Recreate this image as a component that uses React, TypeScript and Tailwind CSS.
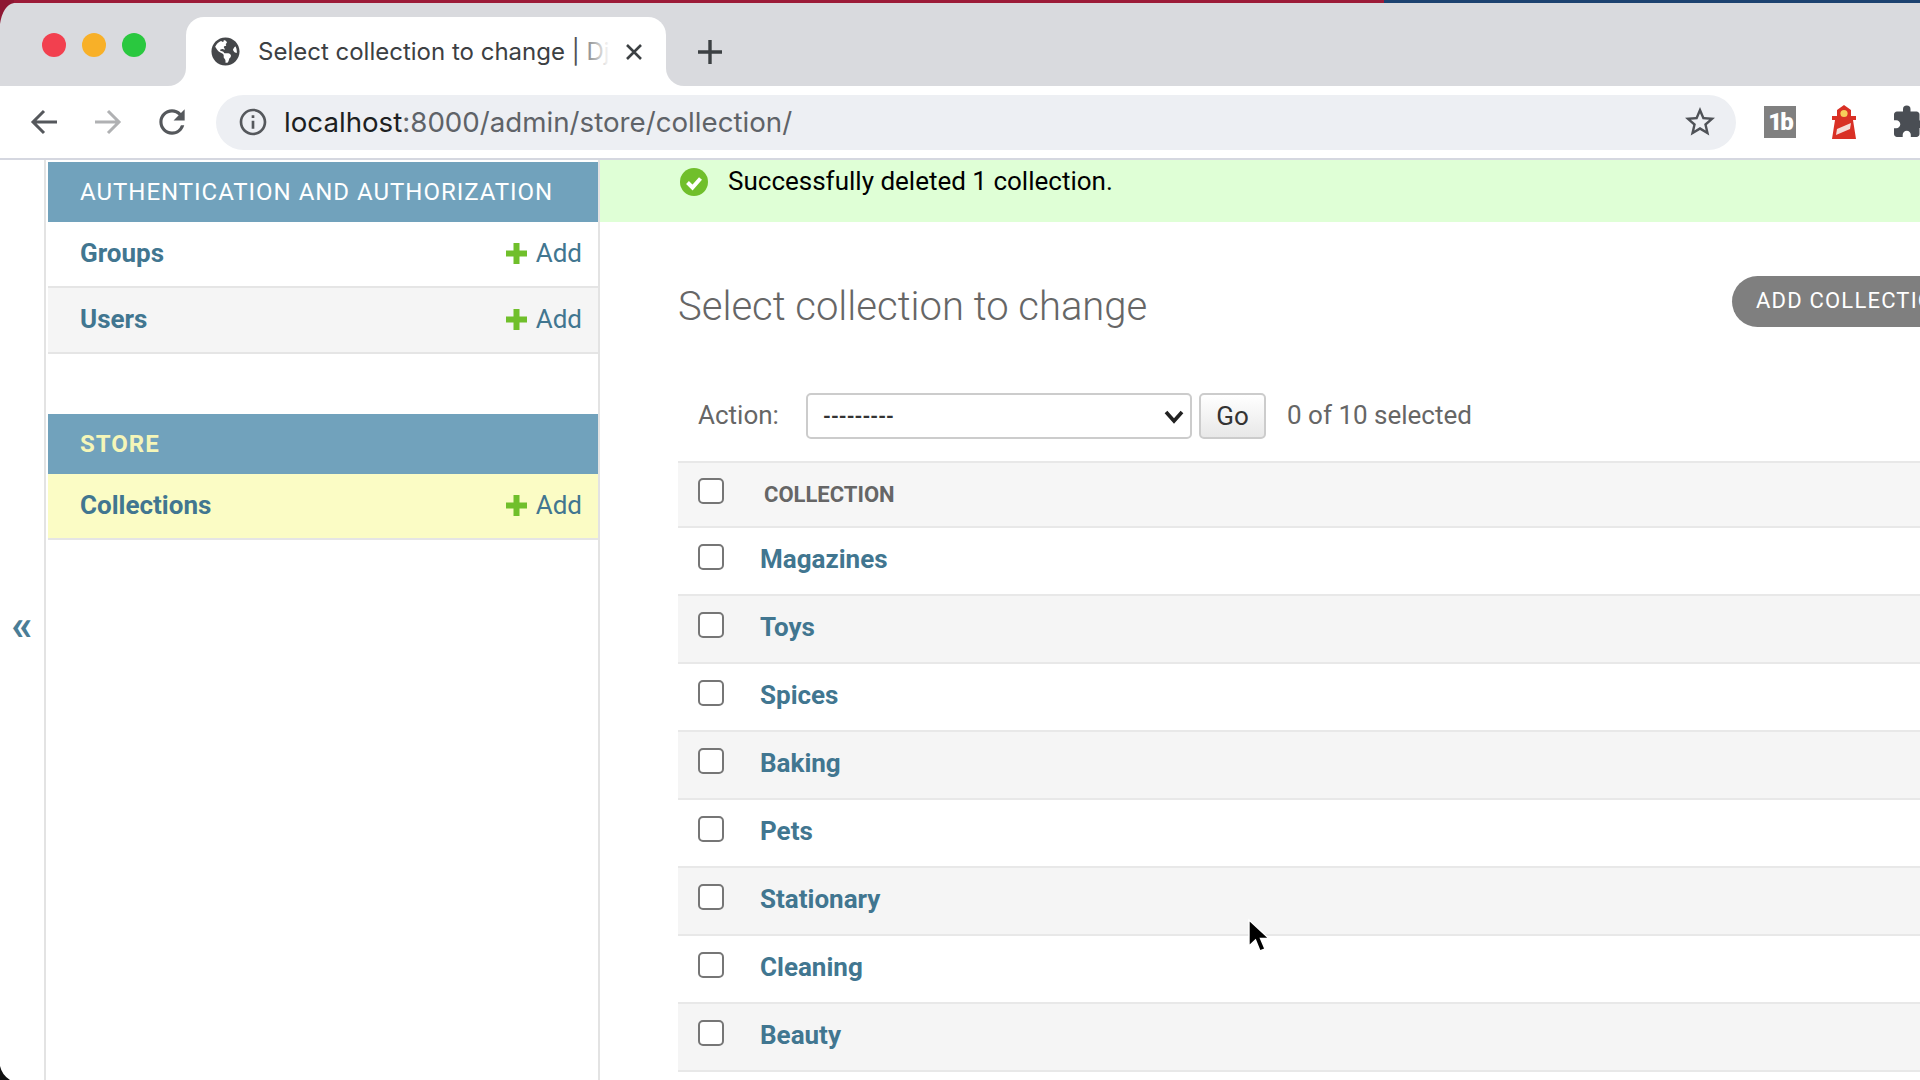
import React from "react";
import { FaGlobeAmericas } from "react-icons/fa";
import { MdExtension, MdInfoOutline, MdRefresh, MdStarBorder } from "react-icons/md";

const roboto = { fontFamily: "Roboto, sans-serif" } as const;

function Plus() {
  return (
    <svg width="23" height="23" viewBox="0 0 23 23" className="shrink-0">
      <path d="M8.5 1h6v7.5H22v6h-7.500V22h-6v-7.500H1v-6h7.500z" fill="#70bf2b" />
    </svg>
  );
}

function ModuleRow({ name, bg }: { name: string; bg: string }) {
  return (
    <div className={`flex items-center justify-between h-[66px] border-b-2 border-[#e5e5e5] pl-[32px] pr-[16px] pb-[2px] ${bg}`}>
      <span className="font-bold text-[#417690] text-[26px]">{name}</span>
      <span className="flex items-center gap-[8px] text-[#417690] text-[26px]">
        <Plus />
        Add
      </span>
    </div>
  );
}

function ModuleHead({ children, yellow }: { children: React.ReactNode; yellow?: boolean }) {
  return (
    <div className={`flex items-center h-[60px] bg-[#71a2bc] pl-[32px] text-[24px] tracking-[0.98px] uppercase ${yellow ? "text-[#f5f6b8] font-bold" : "text-white"}`}>
      {children}
    </div>
  );
}

function Check() {
  return (
    <input
      type="checkbox"
      readOnly
      className="appearance-none block shrink-0 w-[26px] h-[26px] border-2 border-[#767676] rounded-[5px] bg-white"
    />
  );
}

function Row({ name, gray }: { name: string; gray: boolean }) {
  return (
    <div className={`flex items-start h-[68px] border-b-2 border-[#e8e8e8] pl-[20px] pt-[16px] gap-[36px] ${gray ? "bg-[#f5f5f5]" : "bg-white"}`}>
      <Check />
      <span className="font-bold text-[#417690] text-[26px] leading-[30px]">{name}</span>
    </div>
  );
}

export default function App() {
  const rows = ["Magazines", "Toys", "Spices", "Baking", "Pets", "Stationary", "Cleaning", "Beauty"];
  return (
    <div className="relative w-[1920px] h-[1080px] overflow-hidden bg-white flex flex-col" style={roboto}>
      {/* wallpaper strip */}
      <div className="flex h-[3px] shrink-0">
        <div className="w-[1384px] bg-[#9c1b38]" />
        <div className="flex-1 bg-[#1c4270]" />
      </div>

      {/* tab strip */}
      <div className="flex h-[83px] shrink-0 bg-white">
        <div className="w-[186px] shrink-0 bg-[#d9dade] rounded-br-[18px] flex items-start gap-[16px] pl-[42px] pt-[30px]">
          <span className="w-[24px] h-[24px] rounded-full bg-[#f2404f]" />
          <span className="w-[24px] h-[24px] rounded-full bg-[#f8b028]" />
          <span className="w-[24px] h-[24px] rounded-full bg-[#2ac83f]" />
        </div>
        <div className="w-[480px] shrink-0 bg-[#d9dade]">
          <div className="relative h-[69px] mt-[14px] bg-white rounded-t-[18px] flex items-center pl-[25px]">
            <FaGlobeAmericas className="text-[#45474a] shrink-0" size={29} />
            <span className="ml-[18px] w-[351px] overflow-hidden whitespace-nowrap text-[#3c4043] text-[24px]" style={{ fontFamily: "Inter, sans-serif" }}>
              Select collection to change | Django site admin
            </span>
            <div className="absolute left-[386px] top-[20px] w-[38px] h-[30px] bg-gradient-to-r from-transparent to-white" />
            <svg width="18" height="18" viewBox="0 0 18 18" className="absolute left-[439px] top-[26px]">
              <path d="M2 2l14 14M16 2L2 16" stroke="#3c4043" strokeWidth="2.6" />
            </svg>
          </div>
        </div>
        <div className="flex-1 bg-[#d9dade] rounded-bl-[18px] pl-[31px] pt-[36px]">
          <svg width="26" height="26" viewBox="0 0 26 26">
            <path d="M13 1v24M1 13h24" stroke="#3c4043" strokeWidth="3.4" />
          </svg>
        </div>
      </div>

      {/* toolbar */}
      <div className="flex items-center h-[74px] shrink-0 border-b-2 border-[#d5d7e0] bg-white pl-[30px]">
        <svg width="28" height="28" viewBox="0 0 28 28" className="shrink-0">
          <path d="M27 14H3M14 3L3 14l11 11" fill="none" stroke="#55585c" strokeWidth="3" />
        </svg>
        <svg width="28" height="28" viewBox="0 0 28 28" className="shrink-0 ml-[36px]">
          <path d="M1 14h24M14 3l11 11-11 11" fill="none" stroke="#b0b1b3" strokeWidth="3" />
        </svg>
        <MdRefresh className="text-[#55585c] shrink-0 ml-[31px]" size={38} />
        <div className="flex items-center w-[1520px] h-[55px] ml-[25px] shrink-0 rounded-full bg-[#edeff3] pl-[21px] pr-[18px]">
          <MdInfoOutline className="text-[#55585c] shrink-0" size={32} />
          <span className="ml-[15px] pt-[1px] text-[27.7px] text-[#5f6368] whitespace-nowrap" style={{ fontFamily: "Inter, sans-serif" }}>
            <span className="text-[#1d1f22]">localhost</span>:8000/admin/store/collection/
          </span>
          <MdStarBorder className="ml-auto text-[#4f5257] shrink-0" size={36} />
        </div>
        <div className="ml-[28px] w-[32px] h-[32px] shrink-0 bg-[#808080] flex items-center justify-center text-white font-black text-[24px] tracking-[-2px]">
          1b
        </div>
        <svg width="30" height="34" viewBox="0 0 30 34" className="ml-[33px] shrink-0">
          <path d="M15 0l7 5v6h5v4h-3l3 19H3l3-19H3v-4h5V5z" fill="#d93025" />
          <circle cx="15" cy="8.500" r="3.600" fill="#f7cd5a" />
          <path d="M8 24l14-6-1 6-14 6z" fill="#f4dcd8" />
        </svg>
        <MdExtension className="ml-[32px] text-[#4a4e54] shrink-0" size={36} />
      </div>

      {/* page */}
      <div className="flex flex-1 min-h-0">
        <div className="w-[46px] shrink-0 border-r-2 border-[#e3e3e3] flex items-center justify-center pt-[10px] text-[#4a7d96] text-[42px] font-bold">
          «
        </div>
        <div className="w-[554px] shrink-0 border-r-2 border-[#e3e3e3] pl-[2px] pt-[2px]">
          <ModuleHead>Authentication and Authorization</ModuleHead>
          <ModuleRow name="Groups" bg="bg-white" />
          <ModuleRow name="Users" bg="bg-[#f5f5f5]" />
          <div className="h-[60px]" />
          <ModuleHead yellow>Store</ModuleHead>
          <ModuleRow name="Collections" bg="bg-[#fbfcc5]" />
        </div>
        <div className="flex-1 min-w-0">
          <div className="h-[62px] bg-[#dfffd6] flex items-start pl-[80px] pt-[6px]">
            <svg width="28" height="28" viewBox="0 0 28 28" className="mt-[2px] shrink-0">
              <circle cx="14" cy="14" r="14" fill="#70bf2b" />
              <path d="M7.500 14.500l5 5 8-9" fill="none" stroke="white" strokeWidth="4" />
            </svg>
            <span className="ml-[20px] text-[26px] leading-[30px] text-black">Successfully deleted 1 collection.</span>
          </div>
          <div className="pl-[78px]">
            <div className="flex mt-[54px] h-[51px]">
              <h1 className="w-[1054px] shrink-0 text-[#666] text-[40px] font-light leading-[62px]">Select collection to change</h1>
              <div className="shrink-0 w-[300px] h-[51px] rounded-full bg-[#7f7f7f] text-white text-[22px] tracking-[1.2px] pl-[24px] leading-[50px] whitespace-nowrap">
                ADD COLLECTION
              </div>
            </div>
            <div className="flex items-center mt-[66px] h-[46px] pl-[20px] text-[#666] text-[26px]">
              <span className="w-[108px] shrink-0 pb-[1px]">Action:</span>
              <div className="relative w-[386px] h-[46px] shrink-0">
                <select className="appearance-none w-full h-full border-2 border-[#ccc] rounded-[5px] bg-white pl-[15px] text-[#333] text-[20px] font-bold">
                  <option>---------</option>
                </select>
                <svg width="20" height="14" viewBox="0 0 20 14" className="absolute right-[8px] top-[17px]">
                  <path d="M2 2l8 9 8-9" fill="none" stroke="#222" strokeWidth="3.600" />
                </svg>
              </div>
              <div className="ml-[7px] w-[67px] h-[46px] shrink-0 border-2 border-[#ccc] rounded-[5px] bg-gradient-to-b from-white to-[#e8e8e8] flex items-center justify-center text-[#333] text-[26px]">
                Go
              </div>
              <span className="ml-[21px] pb-[1px]">0 of 10 selected</span>
            </div>
            <div className="mt-[22px] border-t-2 border-[#e8e8e8]">
              <div className="flex items-start h-[65px] bg-[#f6f6f6] border-b-2 border-[#e8e8e8] pl-[20px] pt-[15px] gap-[40px]">
                <Check />
                <span className="font-bold text-[#666] text-[22px] leading-[34px]">COLLECTION</span>
              </div>
              {rows.map((r, i) => (
                <Row key={r} name={r} gray={i % 2 === 1} />
              ))}
            </div>
          </div>
        </div>
      </div>

      {/* window corners */}
      <svg width="14" height="26" viewBox="0 0 14 26" className="absolute left-0 top-0">
        <path d="M0 0h14v3Q3 5 0 24z" fill="#8e1733" />
      </svg>
      <svg width="12" height="14" viewBox="0 0 12 14" className="absolute left-0 bottom-0">
        <path d="M0 0Q2 9 10 14H0z" fill="#111" />
      </svg>

      {/* mouse cursor */}
      <svg width="26" height="36" viewBox="0 0 26 36" className="absolute left-[1247px] top-[918px]">
        <path d="M2 2v26l6.500-6 4.500 11 5-2-4.500-10.500H22z" fill="#000" stroke="#fff" strokeWidth="1.400" />
      </svg>
    </div>
  );
}
